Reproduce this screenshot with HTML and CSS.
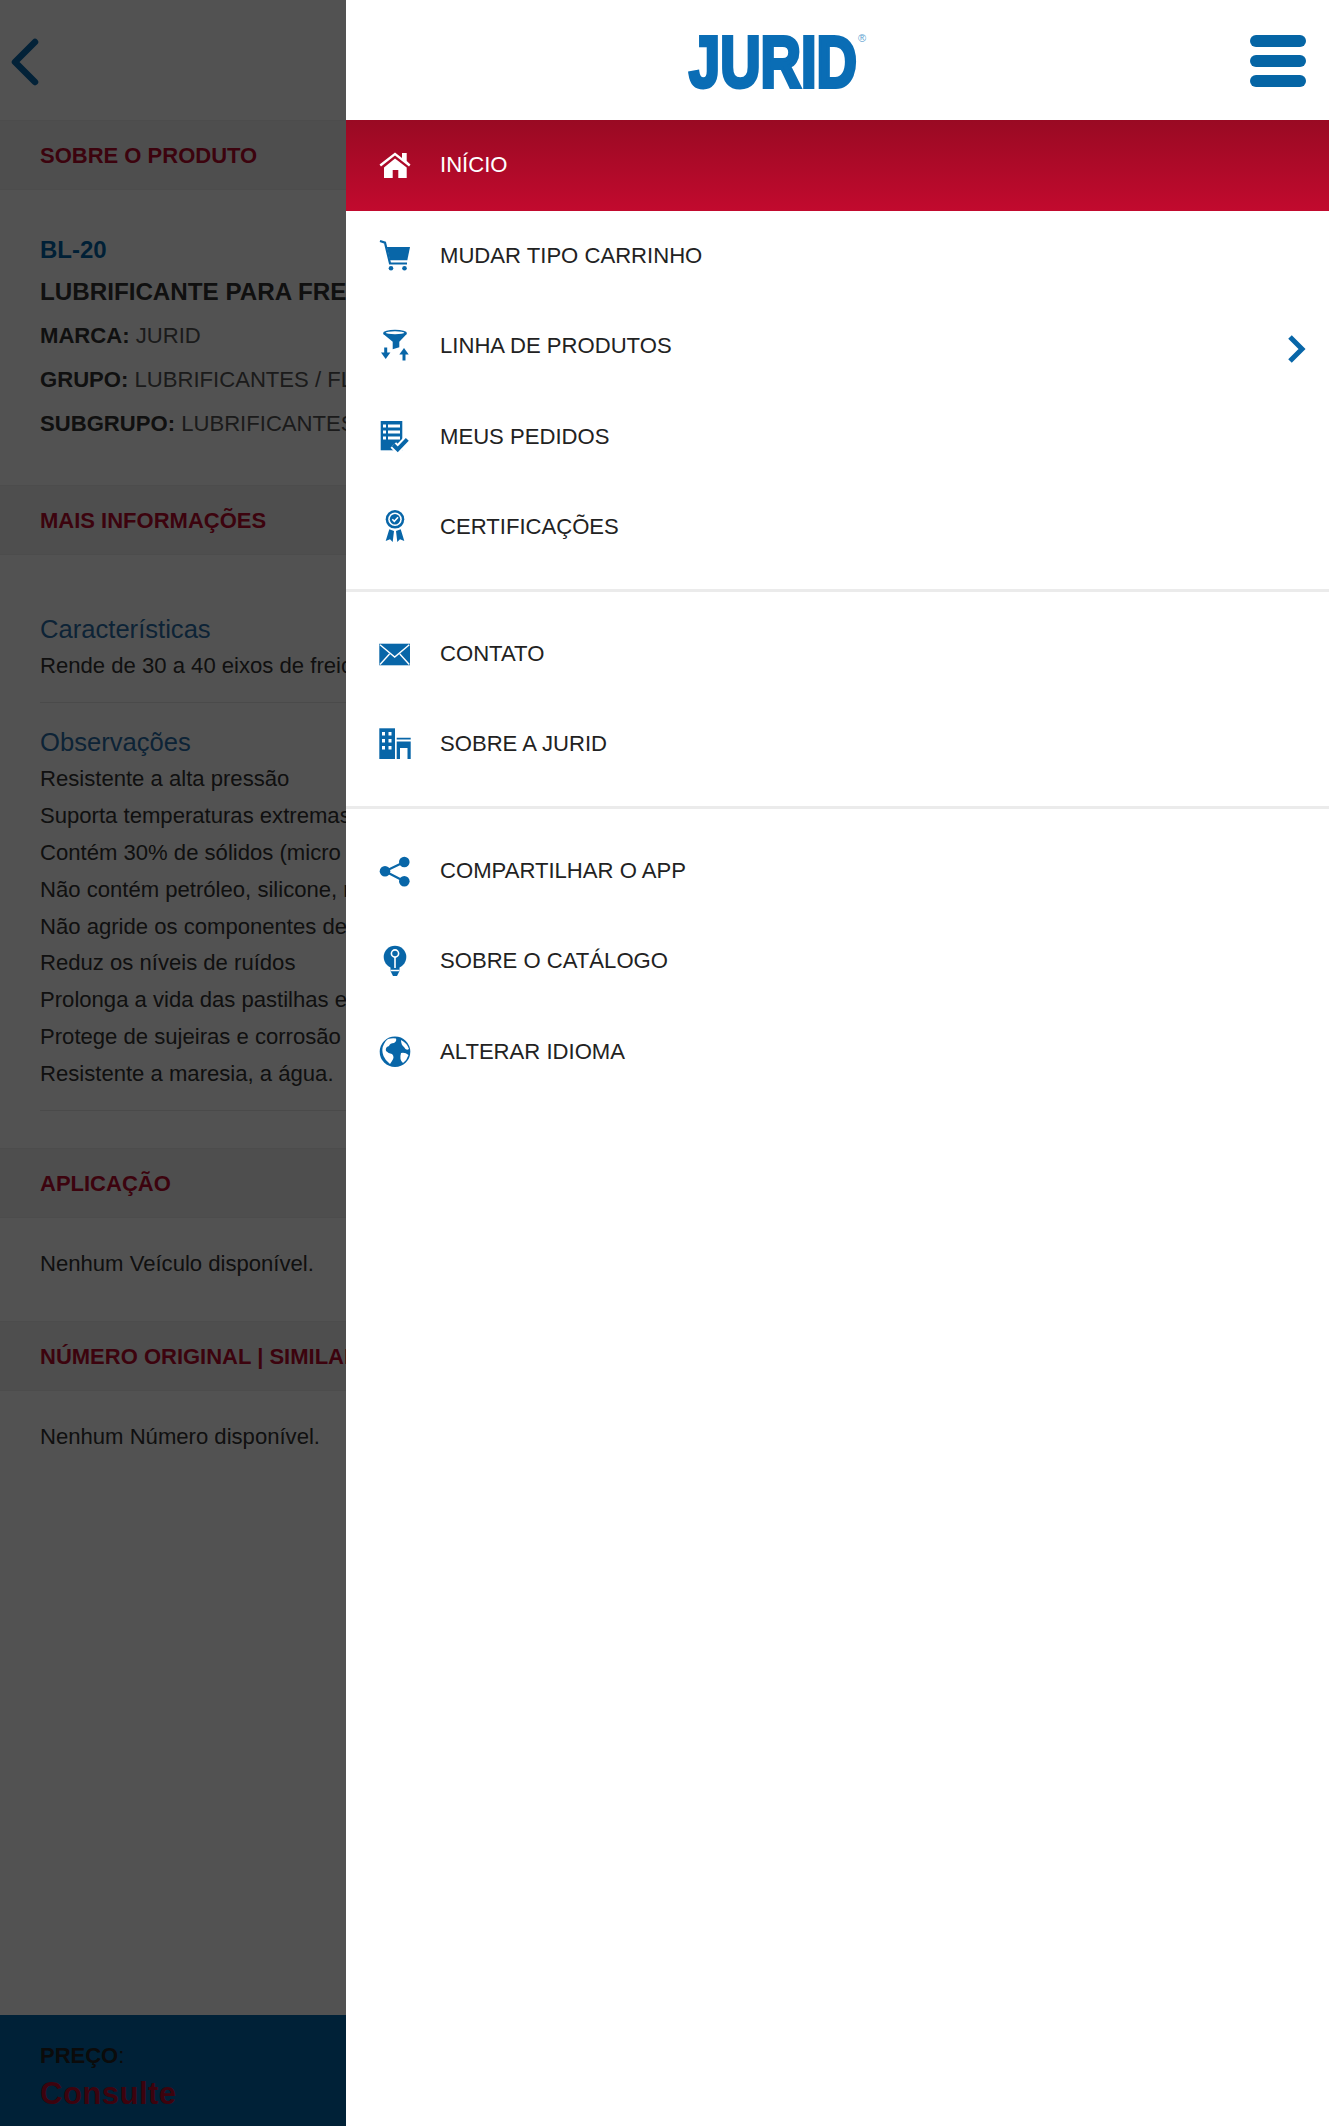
FILE: index.html
```html
<!DOCTYPE html>
<html lang="pt-BR">
<head>
<meta charset="utf-8">
<title>JURID</title>
<link rel="stylesheet" href="styles.css">
</head>
<body>
<div class="app">
  <section class="product">
    <div class="topbar">
      <svg class="back" width="36" height="50" viewBox="0 0 36 50"><path d="M25 5 L5 25 L25 45" /></svg>
    </div>
    <h2 class="band">SOBRE O PRODUTO</h2>
    <div class="about">
      <p class="code">BL-20</p>
      <p class="name">LUBRIFICANTE PARA FREIOS</p>
      <p class="attr"><b>MARCA:</b> JURID</p>
      <p class="attr"><b>GRUPO:</b> LUBRIFICANTES / FLUIDOS</p>
      <p class="attr"><b>SUBGRUPO:</b> LUBRIFICANTES</p>
    </div>
    <h2 class="band">MAIS INFORMAÇÕES</h2>
    <div class="info">
      <div class="info-block">
        <h3>Características</h3>
        <p>Rende de 30 a 40 eixos de freio</p>
      </div>
      <div class="info-block">
        <h3>Observações</h3>
        <p>Resistente a alta pressão</p>
        <p>Suporta temperaturas extremas</p>
        <p>Contém 30% de sólidos (micro partículas)</p>
        <p>Não contém petróleo, silicone, nem chumbo</p>
        <p>Não agride os componentes de borracha</p>
        <p>Reduz os níveis de ruídos</p>
        <p>Prolonga a vida das pastilhas e lonas</p>
        <p>Protege de sujeiras e corrosão</p>
        <p>Resistente a maresia, a água.</p>
      </div>
    </div>
    <h2 class="band">APLICAÇÃO</h2>
    <p class="empty">Nenhum Veículo disponível.</p>
    <h2 class="band">NÚMERO ORIGINAL | SIMILAR</h2>
    <p class="empty">Nenhum Número disponível.</p>
    <div class="price">
      <p class="price-label"><b>PREÇO</b>:</p>
      <p class="price-value">Consulte</p>
    </div>
  </section>

  <aside class="drawer">
    <header class="drawer-head">
      <svg class="logo" width="184" height="66" viewBox="0 0 184 66">
        <text class="logo-word" x="3" y="60" textLength="168" lengthAdjust="spacingAndGlyphs">JURID</text>
        <text class="logo-reg" x="172" y="15">®</text>
      </svg>
      <div class="burger"><span></span><span></span><span></span></div>
    </header>
    <nav>
      <ul class="group">
        <li class="row active">
          <svg class="icon" viewBox="0 0 36 36"><path d="M25 6h4.700v8L33.500 17.500 32 19.500 18 8.500 4 19.500 2.500 17.500 18 5.500 25 11z" fill="#fff"/><path d="M7 20.500 18 11.500 29.700 20.500V31H21.300V23H15.700V31H7z" fill="#fff"/></svg>
          <span>INÍCIO</span>
        </li>
        <li class="row">
          <svg class="icon" viewBox="0 0 36 36"><path d="M3 3 8 4.700 13 25.500 30 25.500" class="ln"/><path d="M9.800 9H33L30.300 22.300H13z"/><circle cx="14" cy="30.300" r="2.300"/><circle cx="27.500" cy="30.300" r="2.300"/></svg>
          <span>MUDAR TIPO CARRINHO</span>
        </li>
        <li class="row">
          <svg class="icon" viewBox="0 0 36 36"><ellipse cx="18" cy="5.200" rx="12" ry="3.400"/><path d="M6.300 6 H29.700 L22.300 13.700V19.300L15.700 21.300V13.700z"/><ellipse cx="18" cy="4.700" rx="9.300" ry="1.500" fill="#fff"/><path d="M8.700 19.500V28" class="ln w3"/><path d="M4 24.500H13.400L8.700 31z"/><path d="M27 32.500V24" class="ln w3"/><path d="M22.300 26.500H31.700L27 20z"/></svg>
          <span>LINHA DE PRODUTOS</span>
          <svg class="chev" width="20" height="30" viewBox="0 0 20 30"><path d="M4 3 L16 15 L4 27"/></svg>
        </li>
        <li class="row">
          <svg class="icon" viewBox="0 0 36 36"><path d="M3.700 2H25.300V31.300H3.700z"/><path d="M6 5.500h3v3H6zM6 11.500h3v3H6zM6 17.500h3v3H6zM11 5.500H23v3H11zM11 11.500H23v3H11zM11 17.500H23v3H11z" fill="#fff"/><path d="M16.300 26 20.700 30.300 30.300 20.300" class="halo"/><path d="M16.300 26 20.700 30.300 30.300 20.300" class="ln thick"/></svg>
          <span>MEUS PEDIDOS</span>
        </li>
        <li class="row">
          <svg class="icon" viewBox="0 0 36 36"><circle cx="18" cy="10.300" r="9.300"/><circle cx="18" cy="10.300" r="6.800" fill="#fff"/><circle cx="18" cy="10.300" r="5.200"/><path d="M15.300 10.300 17.300 12.300 21 8.300" fill="none" stroke="#fff" stroke-width="1.600"/><path d="M12.300 20.300 8.700 32 13 30.300 15.700 33 17 22zM23.700 20.300 27.300 32 23 30.300 20.300 33 19 22z"/></svg>
          <span>CERTIFICAÇÕES</span>
        </li>
      </ul>
      <ul class="group">
        <li class="row">
          <svg class="icon" viewBox="0 0 36 36"><path d="M2.300 7.700H33V29.300H2.300z"/><path d="M3 8.700 17.700 21 32.300 8.700M3 28.500 12.500 18M32.300 28.500 22.800 18" fill="none" stroke="#fff" stroke-width="1.400"/></svg>
          <span>CONTATO</span>
        </li>
        <li class="row">
          <svg class="icon" viewBox="0 0 36 36"><path d="M2.300 2.300H18V33H2.300z"/><path d="M5 6h3v3.500H5zM11.500 6h3v3.500h-3zM5 13h3v3.500H5zM11.500 13h3v3.500h-3zM5 20h3v3.500H5zM11.500 20h3v3.500h-3z" fill="#fff"/><path d="M19.700 11.700H33.700V13.500H19.700zM19.700 15.500H33.700V33H30.500V22H23V33H19.700z"/></svg>
          <span>SOBRE A JURID</span>
        </li>
      </ul>
      <ul class="group last">
        <li class="row">
          <svg class="icon" viewBox="0 0 36 36"><path d="M27.300 9 8 18.300 27.300 28.300" class="ln"/><circle cx="8" cy="18.300" r="5.300"/><circle cx="27.300" cy="9" r="5.300"/><circle cx="27.300" cy="28.300" r="5.300"/></svg>
          <span>COMPARTILHAR O APP</span>
        </li>
        <li class="row">
          <svg class="icon" viewBox="0 0 36 36"><circle cx="18" cy="14" r="11.300"/><path d="M13.500 23H22.500V28L20 33H16L13.500 28z"/><circle cx="18" cy="10.500" r="3.600" fill="none" stroke="#fff" stroke-width="1.600"/><path d="M18 14V25M13.500 27.500H22.500" fill="none" stroke="#fff" stroke-width="1.600"/></svg>
          <span>SOBRE O CATÁLOGO</span>
        </li>
        <li class="row">
          <svg class="icon" viewBox="0 0 36 36"><circle cx="18" cy="17.700" r="15.300"/><path d="M11 5 Q15 4 19 4.500 Q20 7 17 9 Q13 9 12 12 Q8 13 9 17 Q12 20 15 20 Q18 23 15 27 L13 30 Q8 26 6.500 22 Q4 15 7 10 Q8 7 11 5z" fill="#fff"/><path d="M24 6 Q30 9 32 15 Q29 17 27 13 Q24 11 24 6zM24 19 Q28 18 31.500 21 Q30 26 26 29 Q22 26 24 19z" fill="#fff"/></svg>
          <span>ALTERAR IDIOMA</span>
        </li>
      </ul>
    </nav>
  </aside>
</div>
</body>
</html>
```
FILE: styles.css
```css
* { box-sizing: border-box; }
html, body { margin: 0; padding: 0; }
body { font-family: "Liberation Sans", Arial, sans-serif; background: #fff; }
p, h2, h3, ul { margin: 0; padding: 0; }
ul { list-style: none; }

.app { display: flex; width: 1329px; height: 2126px; overflow: hidden; }

/* dimmed product page behind the drawer */
.product {
  position: relative;
  flex: 0 0 346px;
  width: 346px;
  height: 2126px;
  overflow: hidden;
  display: flex;
  flex-direction: column;
  white-space: nowrap;
  background: #fff;
  color: #333;
}
.product::after {
  content: "";
  position: absolute;
  inset: 0;
  background: rgba(0, 0, 0, 0.68);
}
.topbar { height: 120px; display: flex; align-items: center; padding: 3px 0 0 10px; background: #fff; }
.back path { fill: none; stroke: #0a69ad; stroke-width: 6.500; stroke-linecap: round; stroke-linejoin: round; }

.band {
  height: 70px;
  flex: none;
  display: flex;
  align-items: center;
  padding: 2px 0 0 40px;
  background: #f3f3f3;
  border-top: 1px solid #ececec;
  border-bottom: 1px solid #ececec;
  color: #bc0a2d;
  font-size: 22px;
  font-weight: 700;
}

.about { height: 295px; padding: 42px 0 0 40px; font-size: 22.100px; }
.code { color: #0065a8; font-size: 24px; font-weight: 700; line-height: 36px; }
.name { font-size: 24.200px; font-weight: 700; line-height: 48px; margin-bottom: -2px; color: #333; }
.attr { line-height: 44px; color: #555; }
.attr b { color: #333; }

.info { height: 593px; padding: 55px 40px 0; }
.info-block { padding-bottom: 17px; margin-bottom: 20px; border-bottom: 1px solid #e6e6e6; width: 400px; }
.info-block h3 { font-size: 25.600px; font-weight: 400; line-height: 38px; color: #2a6ea8; }
.info-block p { font-size: 22.100px; line-height: 36.900px; color: #333; }

.empty { height: 103px; padding: 28px 0 0 40px; font-size: 22.100px; line-height: 36px; color: #333; }

.price {
  margin-top: auto;
  height: 111px;
  flex: none;
  padding: 24px 0 0 40px;
  background: #0067ac;
}
.price-label { font-size: 22px; line-height: 34px; color: #222; }
.price-value { font-size: 31px; font-weight: 700; line-height: 42px; color: #bc0a2d; letter-spacing: 0.5px; }

/* drawer */
.drawer { flex: 1; height: 2126px; background: #fff; }
.drawer-head { height: 120px; display: flex; align-items: center; padding: 0 23px 0 340px; }
.logo { flex: none; }
.logo-word { font-family: "Liberation Sans", Arial, sans-serif; font-size: 73px; font-weight: 700; fill: #0a6db5; stroke: #0a6db5; stroke-width: 4; }
.logo-reg { font-family: "Liberation Sans", Arial, sans-serif; font-size: 11px; fill: #5c9fd0; }
.burger { margin-left: auto; margin-top: 2px; width: 56px; display: flex; flex-direction: column; gap: 8px; }
.burger span { height: 12px; border-radius: 6px; background: #0565a5; }

.group { padding: 0 0 16px; border-bottom: 3px solid #ebebeb; margin-bottom: 17px; }
.group.last { border-bottom: 0; }
.row {
  height: 90.500px;
  display: flex;
  align-items: center;
  padding: 0 23px 0 31px;
  gap: 27px;
  font-size: 22.100px;
  color: #222;
}
.row.active { background: linear-gradient(#990a23, #c20a2e); color: #fff; }
.icon { width: 36px; height: 36px; flex: none; fill: #0866a8; }
.ln { fill: none; stroke: #0866a8; stroke-width: 2.200; }
.ln.w3 { stroke-width: 3; }
.ln.thick { stroke-width: 4; }
.halo { fill: none; stroke: #fff; stroke-width: 8; }
.chev { margin-left: auto; margin-top: 6px; }
.chev path { fill: none; stroke: #0866a8; stroke-width: 5; }
```
